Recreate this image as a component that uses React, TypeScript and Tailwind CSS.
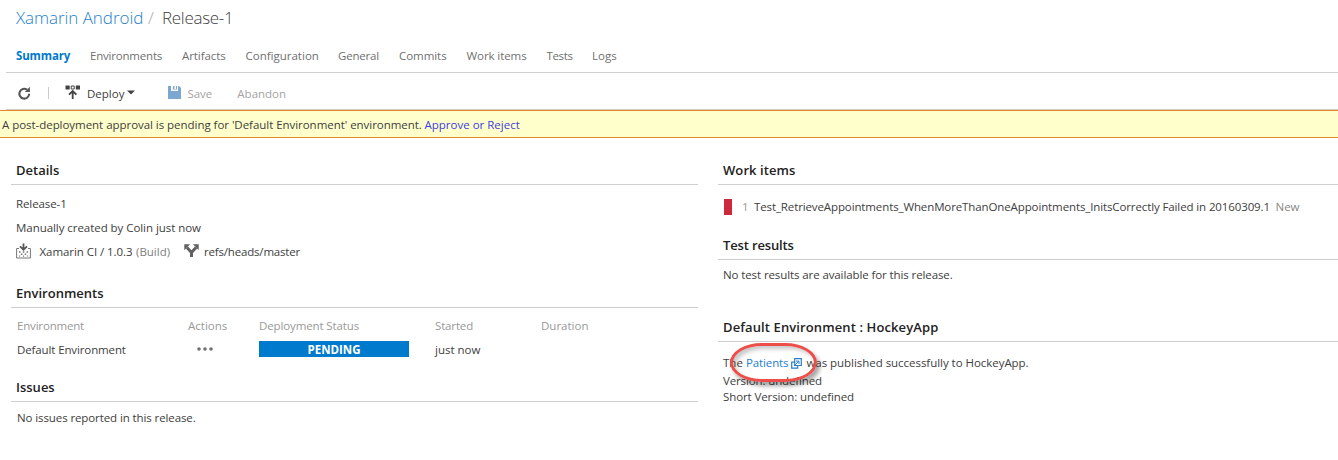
import type { ReactNode } from "react";

const tabs = [
  { label: "Summary", cls: "ml-4 w-[74px] font-bold text-[#007acc] tracking-[-0.15px]" },
  { label: "Environments", cls: "w-[92px] tracking-[-0.2px]" },
  { label: "Artifacts", cls: "w-[63.5px] tracking-[-0.08px]" },
  { label: "Configuration", cls: "w-[92.5px]" },
  { label: "General", cls: "w-[61px] tracking-[-0.2px]" },
  { label: "Commits", cls: "w-[67.5px] tracking-[-0.05px]" },
  { label: "Work items", cls: "w-[80px] tracking-[-0.08px]" },
  { label: "Tests", cls: "w-[45.5px] tracking-[-0.35px]" },
  { label: "Logs", cls: "w-[40px]" },
];

function Heading({ children, className = "" }: { children: ReactNode; className?: string }) {
  return (
    <h2 className={`flex h-[30px] items-center border-b border-[#cfcfcf] pl-[5px] text-[13px] font-semibold text-[#222] ${className}`}>
      {children}
    </h2>
  );
}

function RefreshIcon() {
  return (
    <svg width="14" height="14" viewBox="0 0 14 14" className="mb-px shrink-0">
      <path d="M9 3.6A4.9 4.9 0 1 0 11.2 7.8" fill="none" stroke="#555" strokeWidth="2.1" />
      <path d="M11.9 0.8V6H6.8Z" fill="#555" />
    </svg>
  );
}

function DeployIcon() {
  return (
    <svg width="16" height="15" viewBox="0 0 16 15" className="shrink-0">
      <path d="M0.5 0.5h4.2v4H0.5zM10.8 0.5H15v4h-4.2z" fill="#444" />
      <path d="M6.2 1h3v3h-3z" fill="none" stroke="#444" />
      <path d="M7.7 14V6.5M4 9.7L7.7 6L11.4 9.7" fill="none" stroke="#444" strokeWidth="1.8" />
    </svg>
  );
}

function SaveIcon() {
  return (
    <svg width="13" height="13" viewBox="0 0 13 13" className="shrink-0">
      <path d="M0 0h3v5h7V0h1l2 2v11H0z" fill="#7ba7d0" />
      <path d="M5 0h1.5v3H5zM8 0h1v3.5H4.5V3H8z" fill="#7ba7d0" />
    </svg>
  );
}

function BuildIcon() {
  return (
    <svg width="15" height="16" viewBox="0 0 15 16" className="mb-[2px] shrink-0">
      <path d="M3 5.5H0.6V15H14.4V5.5H12" fill="none" stroke="#777" />
      <path d="M7.5 0.5V6M4 3.4L7.5 6.7L11 3.4" fill="none" stroke="#555" strokeWidth="1.8" />
      <path d="M3 8.2h1.5v1.5H3zM6.8 8.2h1.5v1.5H6.8zM10.6 8.2h1.5v1.5h-1.5zM4.9 10.6h1.5v1.5H4.9zM8.7 10.6h1.5v1.5H8.7zM3 12.4h1.2v1.2H3zM10.9 12.4h1.2v1.2h-1.2zM6.9 12.6h1.2v1.2H6.9z" fill="#777" />
    </svg>
  );
}

function BranchIcon() {
  return (
    <svg width="15" height="13" viewBox="0 0 15 13" className="mb-[3px] shrink-0">
      <path d="M7.5 13V8.5L3 3.5M7.5 8.5L12 3.5" fill="none" stroke="#606060" strokeWidth="3" />
      <path d="M0.3 0.3H6L0.3 6.3ZM14.7 0.3H9L14.7 6.3Z" fill="#606060" />
    </svg>
  );
}

function ExternalIcon() {
  return (
    <svg width="11" height="11" viewBox="0 0 11 11" className="shrink-0">
      <path d="M0.7 4.2h6v6h-6z" fill="none" stroke="#2a7fc8" strokeWidth="1.2" />
      <path d="M3.7 0.7h6.6v6.8H3.7z" fill="#fff" stroke="#2a7fc8" strokeWidth="1.2" />
      <path d="M3 8L7.6 3.4M5 3.1H8V6" fill="none" stroke="#2a7fc8" strokeWidth="1" />
    </svg>
  );
}

export default function App() {
  return (
    <div className="h-[460px] w-full overflow-hidden bg-white font-['Open_Sans','Noto_Sans',sans-serif] text-[11.5px] leading-4 whitespace-nowrap text-[#404040]">
      <header className="flex h-9 items-center pl-4 text-[17px] font-light">
        <span className="w-[132px] tracking-[-0.05px] text-[#1f80cc]">Xamarin Android</span>
        <span className="w-[14px] text-[#aaa]">/</span>
        <span className="tracking-[-0.3px]">Release-1</span>
      </header>

      <nav className="ml-1.5 flex h-[37px] items-center border-b border-[#cfcfcf] pt-[3px] text-[#707070]">
        <div className="-ml-1.5 flex">
          {tabs.map((t) => (
            <span key={t.label} className={t.cls}>{t.label}</span>
          ))}
        </div>
      </nav>

      <div className="ml-1.5 flex h-[37px] items-center border-b border-[#d8cfc4] pt-[5px] pl-3">
        <RefreshIcon />
        <span className="mb-0.5 ml-4 h-3 w-px bg-[#ccc]" />
        <span className="mb-0.5 ml-4"><DeployIcon /></span>
        <span className="ml-[6px]">Deploy</span>
        <svg width="8" height="5" viewBox="0 0 8 5" className="mb-0.5 ml-[3px]"><path d="M0 0.5h8L4 4.5z" fill="#444" /></svg>
        <span className="mb-0.5 ml-[33px]"><SaveIcon /></span>
        <span className="ml-[6px] text-[#a3a3a3]">Save</span>
        <span className="ml-[25px] text-[#a3a3a3]">Abandon</span>
      </div>

      <div className="flex h-7 items-center border-y border-[#e08a2c] bg-[#ffffcc] pt-0.5 pl-0.5">
        <span className="w-[422.5px] tracking-[-0.04px]">A post-deployment approval is pending for 'Default Environment' environment.</span>
        <a className="text-[#4040e0]">Approve or Reject</a>
      </div>

      <main className="flex">
        <section className="mt-[17px] ml-[11px] w-[687px]">
          <Heading>Details</Heading>
          <div className="flex h-[79px] flex-col gap-2 pt-[11px] pl-[5px]">
            <p className="tracking-[-0.1px]">Release-1</p>
            <p className="tracking-[-0.05px]">Manually created by Colin just now</p>
            <div className="flex h-4 items-center">
              <BuildIcon />
              <span className="ml-[8.5px] w-[96.5px] tracking-[-0.06px]">Xamarin CI / 1.0.3</span>
              <span className="w-[47.5px] text-[#808080]">(Build)</span>
              <BranchIcon />
              <span className="ml-[5.5px] tracking-[-0.18px]">refs/heads/master</span>
            </div>
          </div>
          <Heading className="mt-[14px]">Environments</Heading>
          <div className="grid h-[64px] grid-cols-[171px_71px_176px_106px_100px] content-start gap-y-2 pt-[10px] pl-1.5">
            <span className="tracking-[-0.18px] text-[#999]">Environment</span>
            <span className="text-[#999]">Actions</span>
            <span className="tracking-[-0.12px] text-[#999]">Deployment Status</span>
            <span className="tracking-[-0.15px] text-[#999]">Started</span>
            <span className="text-[#999]">Duration</span>
            <span className="tracking-[-0.12px]">Default Environment</span>
            <svg width="18" height="16" viewBox="0 0 18 16" className="ml-2">
              <g fill="#707070"><circle cx="3" cy="7" r="1.8" /><circle cx="9" cy="7" r="1.8" /><circle cx="15" cy="7" r="1.8" /></g>
            </svg>
            <span className="-mt-px h-4 w-[150px] bg-[#007acc] text-center leading-[17px] font-bold text-white">PENDING</span>
            <span>just now</span>
          </div>
          <Heading>Issues</Heading>
          <p className="pt-2 pl-1.5 tracking-[-0.1px]">No issues reported in this release.</p>
        </section>

        <section className="mt-[17px] ml-5 w-[620px] shrink-0">
          <Heading className="tracking-[0.08px]">Work items</Heading>
          <div className="flex h-[45px] items-center pb-0.5 pl-[6px]">
            <span className="h-4 w-2 bg-[#cc293d]" />
            <span className="ml-[10px] w-[12px] text-[#999]">1</span>
            <span className="w-[521.5px] tracking-[-0.115px]">Test_RetrieveAppointments_WhenMoreThanOneAppointments_InitsCorrectly Failed in 20160309.1</span>
            <span className="text-[#888]">New</span>
          </div>
          <Heading className="tracking-[-0.15px]">Test results</Heading>
          <p className="h-[52px] pt-[7px] pl-[5px] tracking-[-0.1px]">No test results are available for this release.</p>
          <Heading className="tracking-[0.11px]">Default Environment : HockeyApp</Heading>
          <div className="relative pt-[13px] pl-[5px]">
            <div className="flex items-center">
              <span className="w-[23px]">The</span>
              <a className="w-[45px] tracking-[-0.12px] text-[#1f7fd0]">Patients</a>
              <ExternalIcon />
              <span className="ml-[4.5px] tracking-[-0.04px]">was published successfully to HockeyApp.</span>
            </div>
            <p className="mt-0.5 tracking-[-0.13px]">Version: undefined</p>
            <p className="tracking-[-0.1px]">Short Version: undefined</p>
            <div className="absolute top-px left-3 h-[39px] w-[87px] rounded-[32px/19.5px] border-[3px] border-[#ee4e49] shadow-[3px_4px_4px_rgba(0,0,0,0.35),inset_3px_3px_4px_rgba(0,0,0,0.22)]" />
          </div>
        </section>
      </main>
    </div>
  );
}
